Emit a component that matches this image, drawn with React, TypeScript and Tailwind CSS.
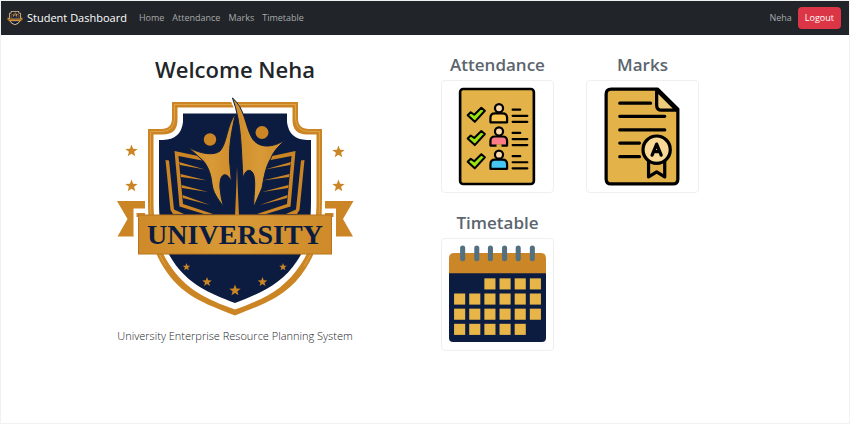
import type { ReactNode } from "react";

const GOLD = "#cc8524";
const NAVY = "#0b1c40";

function starPoints(cx: number, cy: number, r: number) {
  return Array.from({ length: 10 }, (_, i) => {
    const radius = i % 2 === 0 ? r : r * 0.42;
    const angle = (Math.PI / 5) * i - Math.PI / 2;
    return `${(cx + radius * Math.cos(angle)).toFixed(2)},${(cy + radius * Math.sin(angle)).toFixed(2)}`;
  }).join(" ");
}

const STARS = [
  [131.5, 151, 6.5],
  [131.5, 186, 6.5],
  [338.5, 152, 6.5],
  [338.5, 186, 6.5],
  [186.5, 267, 4],
  [207, 282, 5],
  [235, 290.5, 6],
  [262.5, 282, 5],
  [283, 267, 4],
];

function BookHalf() {
  return (
    <g>
      <path d="M165.500 160L169 160.500L174 209.500L184 214H173L170.500 210Z" fill={GOLD} />
      <path
        d="M174.500 151L198 156L202 160.500L178.500 156L183 204L213 214H204L179.500 206.500Z"
        fill={GOLD}
      />
      <path
        d="M179 162L205 169.500L180 165ZM180.500 174L207 180.500L181 177ZM181.500 185L208 192L182 188ZM182.500 195L210 205L183 198Z"
        fill={GOLD}
      />
    </g>
  );
}

function Crest({ id, className }: { id: string; className: string }) {
  return (
    <svg viewBox="115 96 241 221" className={className} role="img" aria-label="University crest">
      <defs>
        <linearGradient id={id} x1="0" x2="1" y1="0" y2="0">
          <stop offset="0" stopColor="#cf8a29" />
          <stop offset="0.5" stopColor="#d89a37" />
          <stop offset="1" stopColor="#cf8a29" />
        </linearGradient>
      </defs>
      <path
        d="M172 102H298V118Q298 129 309 129H322V200C322 236 316 252 306 268C289 295 267 303 235 315.500C203 303 181 295 164 268C154 252 148 236 148 200V129H161Q172 129 172 118Z"
        fill={GOLD}
      />
      <path
        d="M174.500 104.500H295.500V118Q295.500 131.500 309 131.500H319.500V200C319.500 236 313.500 251 304 266"
        fill="none"
        stroke="#e0a348"
        strokeWidth="1"
      />
      <path
        d="M295.500 104.500H174.500V118Q174.500 131.500 161 131.500H150.500V200C150.500 236 156.500 251 166 266"
        fill="none"
        stroke="#e0a348"
        strokeWidth="1"
      />
      <path
        d="M177.500 107.500H292.500V120Q292.500 134.500 307 134.500H316.500V200C316.500 234 310 250 301 264C284 290 264 299 235 309.500C206 299 186 290 169 264C160 250 153.500 234 153.500 200V134.500H163Q177.500 134.500 177.500 120Z"
        fill="#fff"
      />
      <path
        d="M183 113.500H287V122Q289 139.500 307 140H311V200C311 232 306 248 297 261C282 284 261 293 235 303C209 293 188 284 173 261C164 248 159 232 159 200V140H163Q181 139.500 183 122Z"
        fill={NAVY}
      />
      <BookHalf />
      <g transform="translate(470 0) scale(-1 1)">
        <BookHalf />
      </g>
      <path
        d="M188 147C200 154 214 156 220 151C227 144 227 124 235.500 114C232 129 229 145 229.500 160Q230.500 172 231.500 182C228 172 219 171 220 188Q221 199 223.500 206.500C217 198 213 192 212 184C211 172 206 162 200 158Z"
        fill={`url(#${id})`}
        stroke={NAVY}
        strokeWidth="1"
      />
      <path d="M229 97L239 104L241 113H236Z" fill="#fff" />
      <path
        d="M232.500 98C245 108 245 126 252 138C258 148 272 149 286.500 139C276 148 273 153 271 158C265 168 264 178 262 188L254 206.500C253 199 256 187 254 176C252 168 245 168 243 179C241 150 242 124 232.500 98Z"
        fill={`url(#${id})`}
        stroke={NAVY}
        strokeWidth="1"
      />
      <circle cx="210" cy="139.500" r="6.200" fill={GOLD} />
      <circle cx="262" cy="132.500" r="6.500" fill={GOLD} />
      <path d="M237 166Q238 196 239 215H235Q236 196 237 166Z" fill={GOLD} />
      <path d="M117 201H145V217H134V236.500H117.500L127.500 219Z" fill={GOLD} />
      <path d="M353.500 201H325V217H336V236.500H353L343 219Z" fill={GOLD} />
      <path d="M136.500 213V236.500H133.500V208.500H145V213Z" fill="#fff" />
      <path d="M333.500 213V236.500H336V208.500H325V213Z" fill="#fff" />
      <rect x="138.500" y="215" width="193" height="39" fill={`url(#${id})`} stroke="#b87421" />
      <text
        x="235"
        y="244"
        textAnchor="middle"
        fontSize="28"
        fill={NAVY}
        className="font-['Liberation_Serif',serif] font-bold"
      >
        UNIVERSITY
      </text>
      {STARS.map(([x, y, r]) => (
        <polygon key={`${x}-${y}`} points={starPoints(x, y, r)} fill={GOLD} />
      ))}
    </svg>
  );
}

function AttendanceIcon() {
  const shirts = ["#fbc64e", "#fb7c86", "#46c6f2"];
  return (
    <svg viewBox="0 0 98 98" className="w-full" aria-hidden="true">
      <rect x="12" y="2" width="73" height="94" rx="3" fill="#e3b34a" stroke="#000" strokeWidth="2.600" />
      {shirts.map((shirt, i) => (
        <g key={shirt} transform={`translate(0 ${i * 23})`} stroke="#000" strokeLinecap="round" strokeLinejoin="round">
          <path
            d="M19.500 28L22.500 25L26 27.500L33 20.500L36.500 23.500L26.500 34.500Z"
            fill="#9be30d"
            strokeWidth="2"
          />
          <path
            d="M42 35V30.500Q42 26 46.500 26H54Q58.500 26 58.500 30.500V35Z"
            fill={shirt}
            strokeWidth="2.200"
          />
          <circle cx="50.500" cy="21" r="4" fill="#fbd9ad" strokeWidth="2.200" />
          <path d="M64 22.500H71.500M64 28.500H78.500M64 34.500H78.500" fill="none" strokeWidth="2.200" />
        </g>
      ))}
      <path d="M48 58H53" stroke="#e3b34a" strokeWidth="2.600" />
    </svg>
  );
}

function MarksIcon() {
  return (
    <svg viewBox="0 0 98 98" className="w-full" aria-hidden="true">
      <g stroke="#000" strokeWidth="3.200" strokeLinecap="round" strokeLinejoin="round">
        <path d="M18 2H64L84 22V91Q84 96 79 96H18Q13 96 13 91V7Q13 2 18 2Z" fill="#e3b34a" />
        <path d="M63 3V18Q63 23 68 23H83Z" fill="#efcc7c" />
        <path d="M26.500 16H57M26.500 29H71M26.500 42.500H71M26.500 55.500H46M26.500 69H46" fill="none" />
        <path d="M55 72V89L63 84L71 89V72Z" fill="#e3b34a" />
        <circle cx="63" cy="62" r="13.500" fill="#f8d998" />
        <path d="M58.500 67.500L63 56.500L67.500 67.500M60 64H66" fill="none" />
      </g>
    </svg>
  );
}

const CALENDAR_ROWS = [
  { y: 33, columns: [2, 3, 4, 5] },
  { y: 48, columns: [0, 1, 2, 3, 4, 5] },
  { y: 63, columns: [0, 1, 2, 3, 4, 5] },
  { y: 78, columns: [0, 1, 2, 3, 4] },
];

function TimetableIcon() {
  return (
    <svg viewBox="0 0 98 98" className="w-full" aria-hidden="true">
      <path d="M1 25H97V92Q97 96 93 96H5Q1 96 1 92Z" fill={NAVY} />
      <path d="M1 28V13Q1 8 6 8H92Q97 8 97 13V28Z" fill="#cb8628" />
      <path
        d="M14.500 3V13.500M28.500 3V13.500M42 3V13.500M56 3V13.500M69.500 3V13.500M83.500 3V13.500"
        fill="none"
        stroke="#527080"
        strokeWidth="5"
        strokeLinecap="round"
      />
      {CALENDAR_ROWS.map((row) =>
        row.columns.map((column) => (
          <rect
            key={`${row.y}-${column}`}
            x={6 + column * 15}
            y={row.y}
            width="11"
            height="11"
            fill="#e7b548"
          />
        )),
      )}
    </svg>
  );
}

function Tile({ title, children }: { title: string; children: ReactNode }) {
  return (
    <a href="#" className="flex w-[113px] flex-col items-center gap-[3px]">
      <h2 className="text-[17px] leading-6 font-semibold whitespace-nowrap text-[#5c656e]">{title}</h2>
      <span className="block w-full rounded border border-[#eeeff0] bg-white p-1.5">{children}</span>
    </a>
  );
}

export default function App() {
  return (
    <div className="flex min-h-screen flex-col border border-[#f0f1f1] bg-white font-['Open_Sans','Noto_Sans',sans-serif]">
      <nav className="flex h-[34px] items-center bg-[#212529] pr-2 pl-1.5 text-[9px] text-[#a6a8a9]">
        <a href="#" className="flex items-center gap-1 text-[11px] text-white">
          <Crest id="brand-gold" className="h-4 w-4" />
          Student Dashboard
        </a>
        <div className="ml-3 flex gap-2">
          <a href="#">Home</a>
          <a href="#">Attendance</a>
          <a href="#">Marks</a>
          <a href="#">Timetable</a>
        </div>
        <div className="ml-auto flex items-center gap-1.5">
          <a href="#">Neha</a>
          <button type="button" className="h-[22px] rounded bg-[#dc3545] px-[7px] text-white">
            Logout
          </button>
        </div>
      </nav>
      <main className="grid grid-cols-2 px-11 pt-[18px]">
        <section className="flex flex-col items-center">
          <h1 className="text-[22px] leading-8 font-semibold text-[#212529]">Welcome Neha</h1>
          <Crest id="crest-gold" className="mt-[11px] w-[241px]" />
          <p className="mt-[9px] text-[11px] leading-5 font-light text-[#212529]">
            University Enterprise Resource Planning System
          </p>
        </section>
        <section className="flex flex-wrap content-start gap-x-8 gap-y-[18px] pl-4">
          <Tile title="Attendance">
            <AttendanceIcon />
          </Tile>
          <Tile title="Marks">
            <MarksIcon />
          </Tile>
          <Tile title="Timetable">
            <TimetableIcon />
          </Tile>
        </section>
      </main>
    </div>
  );
}
